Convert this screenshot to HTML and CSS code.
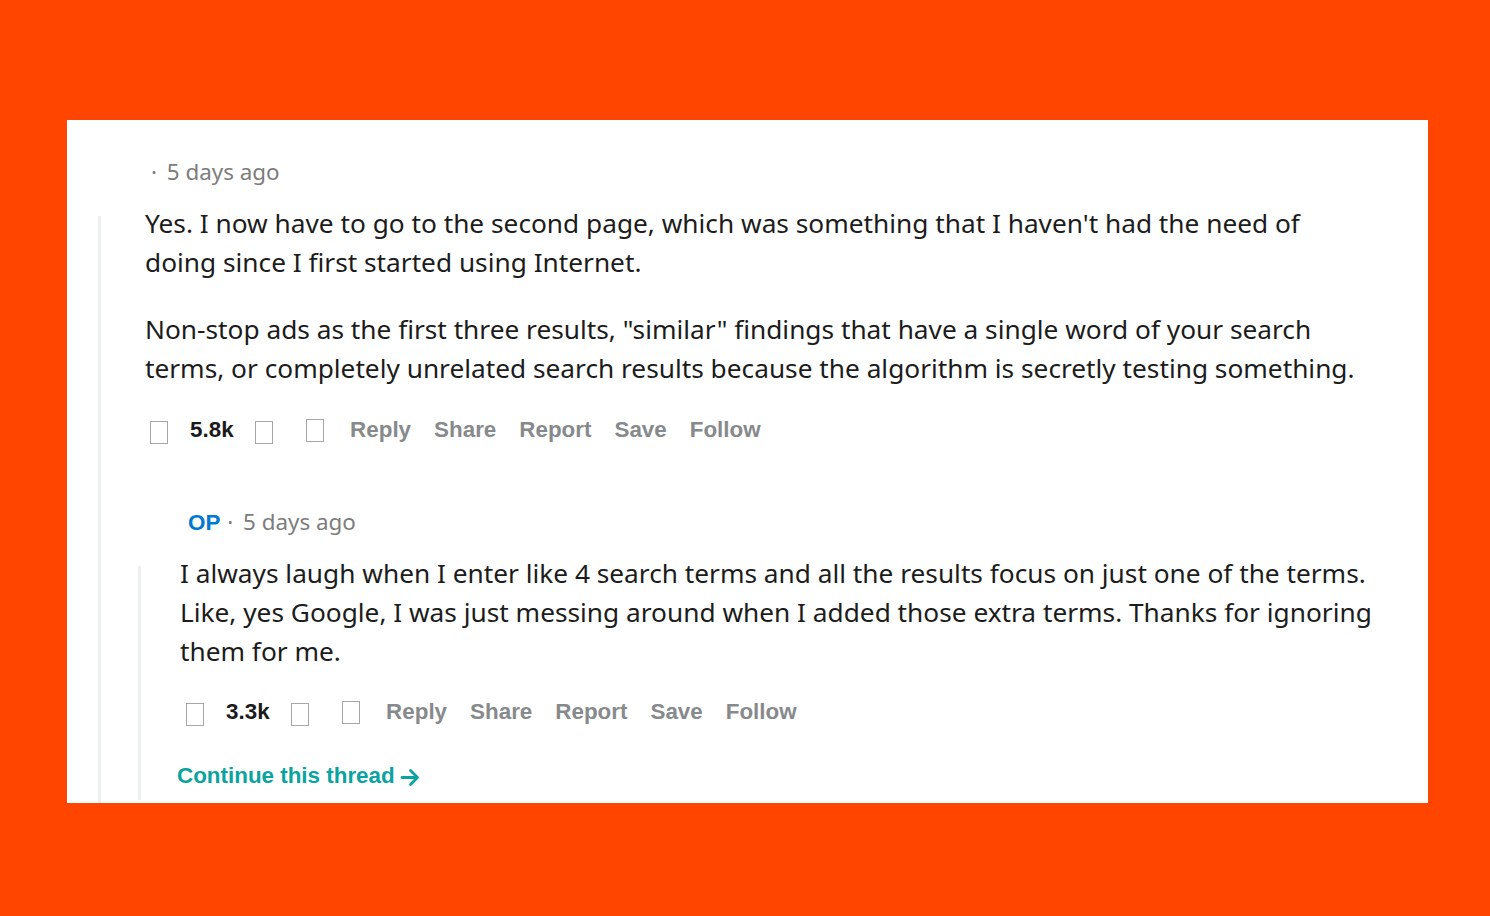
FILE: index.html
```html
<!DOCTYPE html>
<html lang="en">
<head>
<meta charset="utf-8">
<title>Comment thread</title>
<link rel="stylesheet" href="styles.css">
</head>
<body>
<div class="card">
  <div class="comment">
    <div class="meta meta-top"><span class="dot">·</span> 5 days ago</div>
    <div class="thread">
      <div class="rail"></div>
      <div class="thread-body thread-body-outer">
        <div class="text">
          <p>Yes. I now have to go to the second page, which was something that I haven't had the need of doing since I first started using Internet.</p>
          <p>Non-stop ads as the first three results, "similar" findings that have a single word of your search terms, or completely unrelated search results because the algorithm is secretly testing something.</p>
        </div>
        <div class="actions">
          <span class="tofu"></span>
          <span class="count">5.8k</span>
          <span class="tofu"></span>
          <span class="tofu tofu-up"></span>
          <span class="act act-first">Reply</span>
          <span class="act">Share</span>
          <span class="act">Report</span>
          <span class="act">Save</span>
          <span class="act">Follow</span>
        </div>
        <div class="comment reply">
          <div class="meta meta-reply"><span class="op">OP</span> <span class="dot">·</span> 5 days ago</div>
          <div class="thread">
            <div class="rail"></div>
            <div class="thread-body thread-body-inner">
              <div class="text">
                <p>I always laugh when I enter like 4 search terms and all the results focus on just one of the terms. Like, yes Google, I was just messing around when I added those extra terms. Thanks for ignoring them for me.</p>
              </div>
              <div class="actions actions-reply">
                <span class="tofu"></span>
                <span class="count">3.3k</span>
                <span class="tofu"></span>
                <span class="tofu tofu-up"></span>
                <span class="act act-first">Reply</span>
                <span class="act">Share</span>
                <span class="act">Report</span>
                <span class="act">Save</span>
                <span class="act">Follow</span>
              </div>
              <div class="continue">Continue this thread<svg class="arrow" width="20" height="20" viewBox="0 0 20 20" aria-hidden="true"><path d="M2 10.5h15M10.5 3.5l7 7-7 7" fill="none" stroke="currentColor" stroke-width="2.8" stroke-linecap="round" stroke-linejoin="round"/></svg></div>
            </div>
          </div>
        </div>
      </div>
    </div>
  </div>
</div>
</body>
</html>
```
FILE: styles.css
```css
html, body {
  margin: 0;
  padding: 0;
}

body {
  background: #ff4500;
  width: 1490px;
  height: 916px;
  padding: 120px 0 0 67px;
  box-sizing: border-box;
  overflow: hidden;
}

.card {
  width: 1361px;
  height: 683px;
  background: #ffffff;
  box-sizing: border-box;
  padding: 37px 54px 0 31px;
  overflow: hidden;
}

.meta {
  font-family: "Noto Sans", sans-serif;
  font-size: 22.4px;
  line-height: 30px;
  color: #7c7c7c;
  white-space: nowrap;
}

.meta-top {
  padding-left: 53px;
}

.meta-top .dot {
  margin-right: 4px;
}

.meta-reply {
  padding-left: 50px;
}

.meta-reply .dot {
  margin-left: 1px;
  margin-right: 4px;
}

.op {
  font-family: "Liberation Sans", Arial, sans-serif;
  font-weight: bold;
  color: #0079d3;
}

.thread {
  display: flex;
  margin-top: 17px;
}

.rail {
  flex: none;
  width: 3px;
  margin-top: 12px;
  background: #edeff1;
}

.thread-body {
  flex: 1;
  min-width: 0;
}

.thread-body-outer {
  margin-left: 44px;
  padding-bottom: 30px;
}

.thread-body-inner {
  margin-left: 39px;
  padding-bottom: 9px;
}

.text {
  font-family: "Noto Sans", sans-serif;
  font-size: 26.25px;
  line-height: 39px;
  color: #1c1c1c;
}

.text p {
  margin: 0;
}

.text p + p {
  margin-top: 28px;
}

.actions {
  display: flex;
  align-items: flex-start;
  height: 30px;
  margin-top: 27px;
  margin-left: 5px;
  font-family: "Liberation Sans", Arial, sans-serif;
  font-weight: bold;
  font-size: 22.4px;
  line-height: 30px;
}

.actions-reply {
  margin-top: 26px;
  margin-left: 6px;
}

.tofu {
  flex: none;
  box-sizing: border-box;
  width: 18px;
  height: 23px;
  margin-top: 6px;
  border: 1px solid #a6a6a6;
}

.tofu-up {
  margin-top: 4px;
  margin-left: 33px;
}

.count {
  color: #1a1a1b;
  margin: 0 21.5px 0 22px;
}

.act {
  color: #878a8c;
  margin-left: 23px;
}

.act-first {
  margin-left: 26px;
}

.reply {
  margin-top: 62px;
  margin-left: -7px;
}

.reply .thread {
  margin-top: 16px;
}

.continue {
  margin-top: 34px;
  margin-left: -3px;
  font-family: "Liberation Sans", Arial, sans-serif;
  font-weight: bold;
  font-size: 22.4px;
  line-height: 30px;
  color: #0aa3a0;
  display: flex;
  align-items: center;
}

.arrow {
  margin-left: 5px;
  margin-top: 1px;
}
```
